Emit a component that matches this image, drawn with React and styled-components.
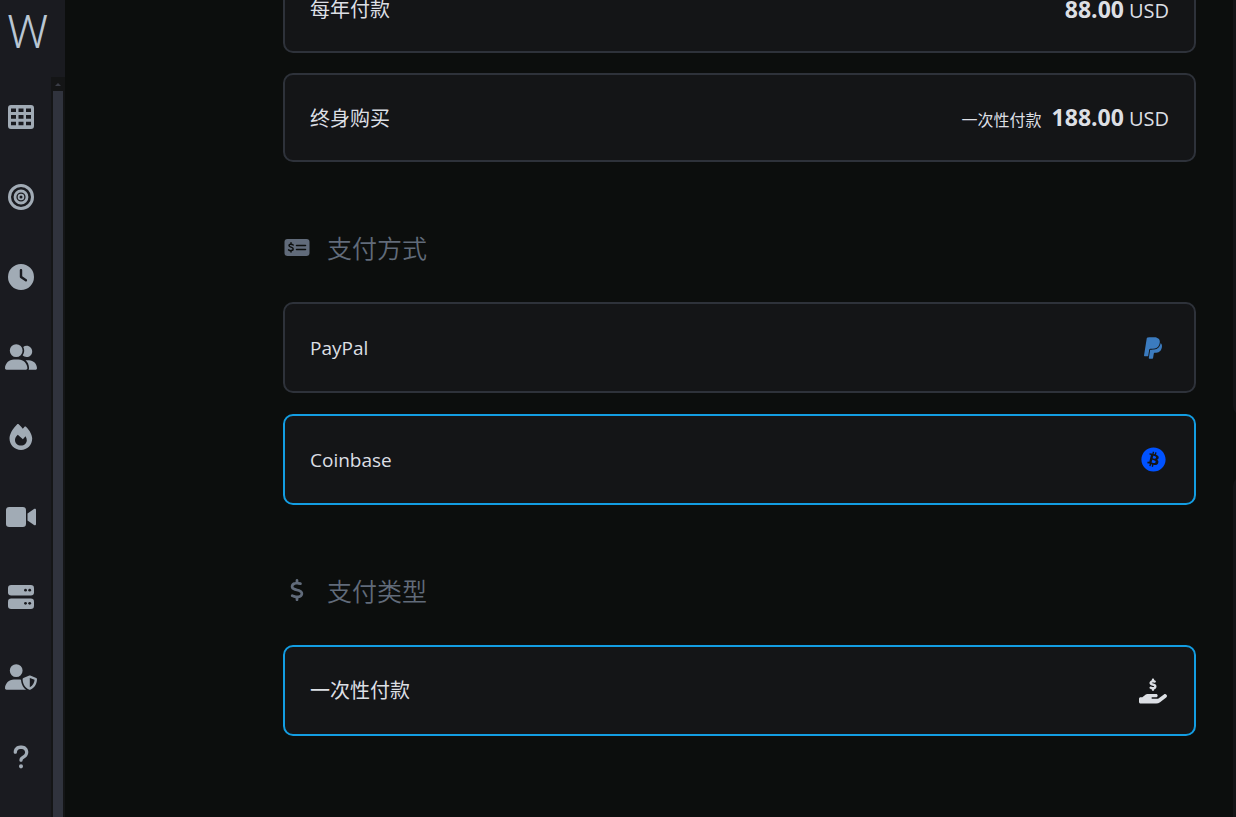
import { useState } from 'react';
import styled, { createGlobalStyle } from 'styled-components';
import {
  FaBitcoin,
  FaClock,
  FaDollarSign,
  FaHandHoldingDollar,
  FaPaypal,
  FaQuestion,
  FaUserGroup,
  FaUserShield,
} from 'react-icons/fa6';

const GlobalStyle = createGlobalStyle`
  * {
    box-sizing: border-box;
  }

  body {
    margin: 0;
    background-color: #0c0e0d;
    color: #dcdfe4;
    font-family: 'Open Sans', 'Noto Sans CJK SC', sans-serif;
    font-size: 20px;
  }
`;

const Page = styled.div`
  display: flex;
  height: 100vh;
  overflow: hidden;
`;

const Sidebar = styled.aside`
  display: flex;
  flex-direction: column;
  flex: none;
  width: 65px;
  background-color: #1a1b20;
`;

const Brand = styled.a`
  flex: none;
  height: 77px;
  padding-left: 7px;
  color: #b9c6d3;
  font-family: Roboto, sans-serif;
  font-size: 46px;
  font-weight: 300;
  line-height: 65px;
  text-decoration: none;
`;

const SidebarBody = styled.div`
  display: flex;
  flex: 1;
  min-height: 0;
`;

const Menu = styled.nav`
  flex: 1;
  overflow: hidden;
`;

const MenuLink = styled.a`
  display: flex;
  align-items: center;
  justify-content: center;
  width: 41px;
  height: 80px;
  color: #a1abb5;
`;

const ScrollTrack = styled.div`
  display: flex;
  flex-direction: column;
  align-items: center;
  width: 14px;
  background-color: #141516;
`;

const ScrollArrow = styled.svg`
  flex: none;
  width: 14px;
  height: 14px;
`;

const ScrollThumb = styled.div`
  flex: 1;
  width: 10px;
  background-color: #30333d;
`;

const Content = styled.main`
  display: flex;
  flex: 1;
  flex-direction: column;
  justify-content: flex-end;
  min-width: 0;
  padding: 0 37px 81px 218px;
`;

const Section = styled.fieldset`
  display: flex;
  flex-direction: column;
  flex: none;
  gap: ${({ $gap }) => $gap || 20}px;
  min-width: 0;
  margin: 0;
  padding: 0;
  border: 0;
`;

const SectionTitle = styled.h2`
  display: flex;
  flex: none;
  align-items: center;
  gap: 17px;
  height: 40px;
  margin: 66px 0 34px;
  color: #616b7a;
  font-size: 25px;
  font-weight: 350;
  line-height: 40px;
`;

const TitleIcon = styled.span`
  display: flex;
  justify-content: center;
  width: 27px;
  padding-bottom: 2px;
`;

const Option = styled.label`
  display: flex;
  align-items: center;
  justify-content: space-between;
  height: ${({ $tall }) => ($tall ? 91 : 89)}px;
  padding: ${({ $tall }) => ($tall ? 0 : 2)}px 25px 0;
  border: 2px solid ${({ $active }) => ($active ? '#139de2' : '#2e323a')};
  border-radius: 10px;
  background-color: #141517;
  line-height: 30px;
  cursor: pointer;
`;

const Radio = styled.input`
  position: absolute;
  opacity: 0;
`;

const Brandname = styled.span`
  font-size: 19px;
`;

const Price = styled.span`
  display: flex;
  align-items: baseline;
  gap: 5px;
`;

const Amount = styled.strong`
  font-size: 23px;
  font-weight: 700;
`;

const Note = styled.small`
  margin-right: 5px;
  font-size: 16px;
`;

const OptionIcon = styled.span`
  display: flex;
  justify-content: center;
  width: 32px;
  color: ${({ $color }) => $color};
`;

const Summary = styled.aside`
  display: flex;
  flex-direction: column;
  flex: none;
  gap: 60px;
  width: 3px;
  overflow: hidden;
`;

const SummaryPanel = styled.div`
  flex: ${({ $grow }) => $grow} 1 0;
  width: 300px;
  border-radius: ${({ $radius }) => $radius};
  background-color: #141517;
`;

const GridIcon = () => (
  <svg width="26" height="24" viewBox="0 0 26 24" fill="currentColor" fillRule="evenodd">
    <path d="M3 0h20a3 3 0 0 1 3 3v18a3 3 0 0 1-3 3H3a3 3 0 0 1-3-3V3a3 3 0 0 1 3-3ZM3 3.500V7h5V3.500ZM10.500 3.500V7h5V3.500ZM18 3.500V7h5V3.500ZM3 10v3.700h5V10ZM10.500 10v3.700h5V10ZM18 10v3.700h5V10ZM3 16.700v3.600h5v-3.600ZM10.500 16.700v3.600h5v-3.600ZM18 16.700v3.600h5v-3.600Z" />
  </svg>
);

const TargetIcon = () => (
  <svg width="26" height="26" viewBox="0 0 26 26" fill="none" stroke="currentColor">
    <circle cx="13" cy="13" r="11.500" strokeWidth="3" />
    <circle cx="13" cy="13" r="6" strokeWidth="2.800" />
    <circle cx="13" cy="13" r="2.400" strokeWidth="1.800" />
  </svg>
);

const FlameIcon = () => (
  <svg width="24" height="26" viewBox="0 0 24 26" fill="currentColor" fillRule="evenodd">
    <path d="M8 .4c.6-.5 1.300-.5 1.900 0 1.500 1.400 2.700 2.800 3.900 4.300L15.300 3c.6-.6 1.300-.6 1.900 0C20.600 6.200 23.200 11 23.200 14.500 23.200 21 18.200 26 12 26S.5 21 .5 14.500C.5 10.200 3.500 4.800 8 .4ZM8.800 10.800C7 12.500 6 14.300 6 16c0 3.400 2.600 5.600 6 5.600s5.800-2.300 5.800-5.300c0-1.400-.5-2.800-1.300-4.100l-2.600 3Z" />
  </svg>
);

const VideoIcon = () => (
  <svg width="30" height="20" viewBox="0 0 30 20" fill="currentColor">
    <rect width="20" height="20" rx="3.200" />
    <path d="M21.500 6.500 28 2c1-.6 2-.1 2 1v14c0 1.100-1 1.600-2 1l-6.500-4.500Z" />
  </svg>
);

const ServerIcon = () => (
  <svg width="26" height="24" viewBox="0 0 26 24" fill="currentColor">
    <rect width="26" height="10.500" rx="3.200" />
    <rect y="13.500" width="26" height="10.500" rx="3.200" />
    <g fill="#1a1b20">
      <circle cx="17.500" cy="5.200" r="1.400" />
      <circle cx="21.700" cy="5.200" r="1.400" />
      <circle cx="17.500" cy="18.300" r="1.400" />
      <circle cx="21.700" cy="18.300" r="1.400" />
    </g>
  </svg>
);

const MoneyCheckIcon = () => (
  <svg width="26" height="17" viewBox="0 0 26 17">
    <rect width="25" height="17" x=".5" rx="3" fill="currentColor" />
    <g fill="none" stroke="#0c0e0d" strokeWidth="1.500" strokeLinecap="round">
      <path d="M12.500 6.400h9M12.500 10.600h9M9.200 6C8 5 5 4.800 5 6.600 5 8.500 9.200 7.800 9.200 10 9.200 12 6 12 4.600 10.900M7 3.800v1.400M7 11.500v1.400" />
    </g>
  </svg>
);

const MENU = [
  { name: 'Board', icon: <GridIcon /> },
  { name: 'Targets', icon: <TargetIcon /> },
  { name: 'History', icon: <FaClock size={26} /> },
  { name: 'Groups', icon: <FaUserGroup size={32} /> },
  { name: 'Trending', icon: <FlameIcon /> },
  { name: 'Videos', icon: <VideoIcon /> },
  { name: 'Servers', icon: <ServerIcon /> },
  { name: 'Privacy', icon: <FaUserShield size={32} /> },
  { name: 'Help', icon: <FaQuestion size={26} /> },
];

const App = () => {
  const [plan, setPlan] = useState('');
  const [method, setMethod] = useState('coinbase');
  const [type, setType] = useState('once');

  return (
    <Page>
      <GlobalStyle />
      <Sidebar>
        <Brand href="#home">W</Brand>
        <SidebarBody>
          <Menu>
            {MENU.map(({ name, icon }) => (
              <MenuLink key={name} href={`#${name.toLowerCase()}`} aria-label={name}>
                {icon}
              </MenuLink>
            ))}
          </Menu>
          <ScrollTrack>
            <ScrollArrow viewBox="0 0 14 14">
              <path d="M4 9 7 6l3 3Z" fill="#3a3d46" />
            </ScrollArrow>
            <ScrollThumb />
          </ScrollTrack>
        </SidebarBody>
      </Sidebar>

      <Content>
        <Section>
          <Option $active={plan === 'year'}>
            <Radio type="radio" name="plan" checked={plan === 'year'} onChange={() => setPlan('year')} />
            每年付款
            <Price>
              <Amount>88.00</Amount> USD
            </Price>
          </Option>
          <Option $active={plan === 'life'}>
            <Radio type="radio" name="plan" checked={plan === 'life'} onChange={() => setPlan('life')} />
            终身购买
            <Price>
              <Note>一次性付款</Note>
              <Amount>188.00</Amount> USD
            </Price>
          </Option>
        </Section>

        <SectionTitle>
          <TitleIcon>
            <MoneyCheckIcon />
          </TitleIcon>
          支付方式
        </SectionTitle>
        <Section $gap={21}>
          <Option $tall $active={method === 'paypal'}>
            <Radio type="radio" name="method" checked={method === 'paypal'} onChange={() => setMethod('paypal')} />
            <Brandname>PayPal</Brandname>
            <OptionIcon $color="#3b7bbf">
              <FaPaypal size={24} />
            </OptionIcon>
          </Option>
          <Option $tall $active={method === 'coinbase'}>
            <Radio type="radio" name="method" checked={method === 'coinbase'} onChange={() => setMethod('coinbase')} />
            <Brandname>Coinbase</Brandname>
            <OptionIcon $color="#0052ff">
              <FaBitcoin size={25} />
            </OptionIcon>
          </Option>
        </Section>

        <SectionTitle>
          <TitleIcon>
            <FaDollarSign size={22} />
          </TitleIcon>
          支付类型
        </SectionTitle>
        <Section>
          <Option $tall $active={type === 'once'}>
            <Radio type="radio" name="type" checked={type === 'once'} onChange={() => setType('once')} />
            一次性付款
            <OptionIcon $color="#dcdfe4">
              <FaHandHoldingDollar size={28} />
            </OptionIcon>
          </Option>
        </Section>
      </Content>

      <Summary>
        <SummaryPanel $grow={11} $radius="0 0 10px 10px" />
        <SummaryPanel $grow={9} $radius="10px 10px 0 0" />
      </Summary>
    </Page>
  );
};

export default App;
